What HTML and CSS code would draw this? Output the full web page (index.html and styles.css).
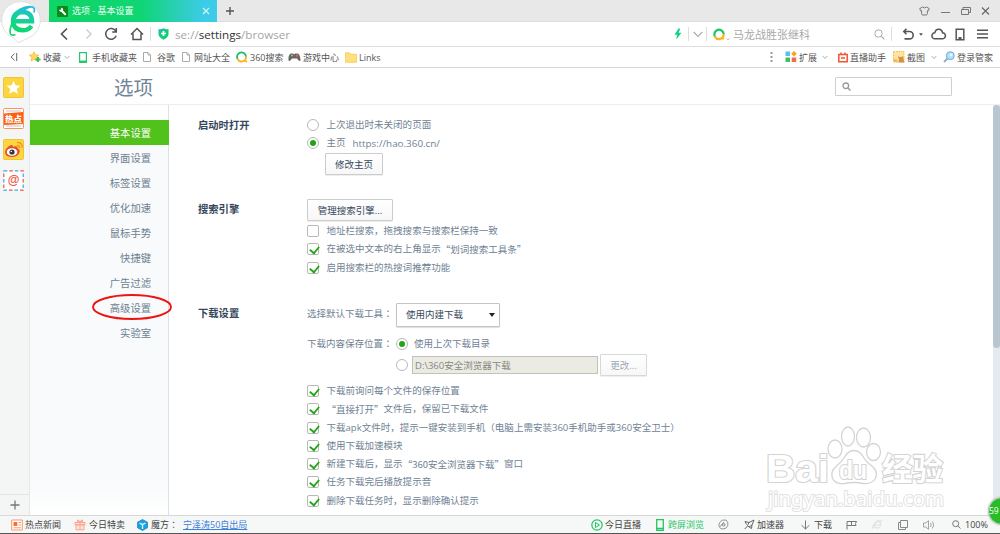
FILE: index.html
```html
<!DOCTYPE html>
<html lang="zh-CN">
<head>
<meta charset="utf-8">
<title>选项 - 基本设置</title>
<link rel="stylesheet" href="styles.css">
</head>
<body>
<div class="browser">
  <header class="titlebar">
    <div class="tab">
      <svg class="tab-icon" viewBox="0 0 11 11" width="11" height="11"><rect width="11" height="11" rx="1" fill="#0b8a1c"/><path d="M4.2 4.2L8.2 8.3" stroke="#fff" stroke-width="2" stroke-linecap="round"/><path d="M2.2 3.6a2 2 0 1 0 1.5-1.7l1 1.3-.8 1.2z" fill="#fff"/></svg>
      <span class="tab-title">选项 - 基本设置</span>
      <svg width="8" height="8" viewBox="0 0 8 8"><path d="M1 1l6 6M7 1L1 7" stroke="#d9f6f7" stroke-width="1.1"/></svg>
    </div>
    <svg class="newtab" width="10" height="10" viewBox="0 0 10 10"><path d="M5 1v8M1 5h8" stroke="#555" stroke-width="1.4"/></svg>
    <div class="window-buttons">
      <svg width="11" height="10" viewBox="0 0 11 10"><path d="M3.5 1Q5.5 2.7 7.5 1L10.3 2.7 9.4 4.8 8.4 4.6V7.5Q8.4 9 7 9H4Q2.6 9 2.6 7.5V4.6L1.6 4.8.7 2.7z" fill="none" stroke="#777"/></svg>
      <svg width="9" height="10" viewBox="0 0 9 10"><path d="M0 6.5h9" stroke="#777"/></svg>
      <svg width="10" height="10" viewBox="0 0 10 10"><path d="M.5 3.5h7v5h-7zM2 3V1.5h7.500v5H8" fill="none" stroke="#777"/></svg>
      <svg width="9" height="10" viewBox="0 0 9 10"><path d="M1 1.500l7 7M8 1.500l-7 7" stroke="#666" stroke-width="1.1"/></svg>
    </div>
  </header>

  <div class="navbar">
    <svg width="8" height="14" viewBox="0 0 8 14"><path d="M7 1.500L1.500 7 7 12.500" fill="none" stroke="#555" stroke-width="1.7"/></svg>
    <svg width="8" height="12" viewBox="0 0 8 12"><path d="M1.500 1.500L6 6l-4.500 4.500" fill="none" stroke="#ccc" stroke-width="1.4"/></svg>
    <svg width="14" height="14" viewBox="0 0 14 14"><path d="M11.800 4.200A5.400 5.400 0 1 0 12.200 8.800M12.300 1v4H8.200" fill="none" stroke="#555" stroke-width="1.5"/></svg>
    <svg width="14" height="14" viewBox="0 0 14 14"><path d="M1 7.500L7 1.500l6 6M3 6.500v6h8v-6" fill="none" stroke="#555" stroke-width="1.5"/></svg>
    <i class="divider"></i>
    <svg width="11" height="12" viewBox="0 0 11 12"><defs><linearGradient id="shield" x1="0" x2="1" y2="1"><stop stop-color="#19b7d0"/><stop offset=".5" stop-color="#12cf76"/><stop offset="1" stop-color="#06cb69"/></linearGradient></defs><path d="M.5 1Q3 1.500 5.500.3 8 1.500 10.500 1v5.500Q10 9.500 5.500 11.700 1 9.500.5 6.500z" fill="url(#shield)"/><path d="M5.500 3v5M3 5.500h5" stroke="#fff" stroke-width="1.700"/></svg>
    <div class="url"><span>se://</span><b>settings</b><span>/browser</span></div>
    <svg width="8" height="12" viewBox="0 0 8 12"><path d="M4.500.5L.5 6.700h2.500L2.300 11.500 7.500 4.800H4.600L6.300.5z" fill="#12d383"/></svg>
    <i class="divider"></i>
    <svg width="10" height="7" viewBox="0 0 10 7"><path d="M.7 1L5 5.500 9.300 1" fill="none" stroke="#aaa" stroke-width="1.100"/></svg>
    <i class="divider"></i>
    <svg width="18" height="13" viewBox="0 0 18 13"><path d="M1.800 8.500a4.700 4.700 0 1 1 8.900-2.500" fill="none" stroke="#17c964" stroke-width="2.200"/><path d="M10.700 6a4.700 4.700 0 0 1-8.800 2.600" fill="none" stroke="#fbb51d" stroke-width="2.200"/><path d="M8.800 9.800l2 1.500" stroke="#fbb51d" stroke-width="2"/><path d="M13.500 10.500l1.500 1.400 1.500-1.400" fill="none" stroke="#aaa" stroke-width=".8"/></svg>
    <span class="hot-search">马龙战胜张继科</span>
    <svg width="11" height="11" viewBox="0 0 11 11"><circle cx="4.500" cy="4.500" r="3.700" fill="none" stroke="#aaa"/><path d="M7.300 7.300L10.300 10.300" stroke="#aaa" stroke-width="1.100"/></svg>
    <i class="divider"></i>
    <svg width="12" height="12" viewBox="0 0 12 12"><path d="M4.500.8L1.800 3.500l2.700 2.700M2 3.500h5.500a3.700 3.700 0 0 1 0 7.400H2.500" fill="none" stroke="#555" stroke-width="1.600"/></svg>
    <svg width="4" height="3" viewBox="0 0 4 3"><path d="M0 .3h4L2 2.700z" fill="#555"/></svg>
    <svg width="15" height="12" viewBox="0 0 15 12"><path d="M4 10.800a3 3 0 0 1-.2-6Q4.500 1 8 1.200 11 1.400 11.600 4.800A3 3 0 0 1 11.300 10.800z" fill="none" stroke="#555" stroke-width="1.500"/></svg>
    <svg width="10" height="13" viewBox="0 0 10 13"><path d="M1.200 1.200h7.600v10.600H1.200z" fill="none" stroke="#555" stroke-width="1.500"/><path d="M3.500 10h3" stroke="#555" stroke-width="2"/></svg>
    <svg width="11" height="10" viewBox="0 0 11 10"><path d="M0 1.200h11M0 5h11M0 8.800h11" stroke="#555" stroke-width="1.400"/></svg>
  </div>

  <nav class="bookmarks">
    <svg width="8" height="10" viewBox="0 0 8 10"><path d="M4.500 1.500L1.200 5l3.300 3.500M6.700 1v8" fill="none" stroke="#666"/></svg>
    <svg width="12" height="12" viewBox="0 0 12 12"><path d="M5 .7l1.400 3 3.300.4L7.400 6.500l.6 3.400-3-1.600-3 1.600.6-3.400L.3 4.100l3.300-.4z" fill="#ffd95e" stroke="#f0b43c" stroke-width=".7"/><path d="M9 6v5M6.500 8.500h5" stroke="#43bb61" stroke-width="2"/></svg>
    <span>收藏</span>
    <svg width="6" height="5" viewBox="0 0 6 5"><path d="M.7 1L3 3.500 5.300 1" fill="none" stroke="#999" stroke-width=".8"/></svg>
    <svg width="8" height="11" viewBox="0 0 8 11"><path d="M.6.6h6.800v9.800H.6z" fill="#fff" stroke="#28c76f" stroke-width="1.200"/><path d="M1 9.300h6" stroke="#28c76f" stroke-width="1.500"/></svg>
    <span>手机收藏夹</span>
    <svg width="8" height="10" viewBox="0 0 8 10"><path d="M.5.5h4.500l2.500 2.500v6.500h-7zM5 .5V3h2.500" fill="none" stroke="#aaa"/></svg>
    <span>谷歌</span>
    <svg width="8" height="10" viewBox="0 0 8 10"><path d="M.5.5h4.500l2.500 2.500v6.500h-7zM5 .5V3h2.500" fill="none" stroke="#aaa"/></svg>
    <span>网址大全</span>
    <svg width="12" height="12" viewBox="0 0 12 12"><path d="M1.500 8a4.500 4.500 0 1 1 8.500-2.300" fill="none" stroke="#19bf6a" stroke-width="1.800"/><path d="M10 5.700A4.500 4.500 0 0 1 1.500 8M9 9.700l2 1.300" fill="none" stroke="#fbb51d" stroke-width="1.800"/></svg>
    <span>360搜索</span>
    <svg width="13" height="10" viewBox="0 0 13 10"><path d="M2.800 1.500H5l1 1 1-1h3Q12.300 3 12.500 8.500q-1.500 1.500-3.500-2H4Q2 10 .5 8.500 0 3 2.800 1.500z" fill="#666"/><path d="M3 3.500h2M4 2.500v2" stroke="#7fd477"/><circle cx="9" cy="3.500" r="1.300" fill="#e55"/></svg>
    <span>游戏中心</span>
    <svg width="12" height="11" viewBox="0 0 12 11"><path d="M.5.8h4l1 1.500h6v8H.5z" fill="#ffe07b" stroke="#f0cc62" stroke-width=".8"/></svg>
    <span>Links</span>
    <svg width="3" height="12" viewBox="0 0 3 12"><path d="M.5 1h2v2h-2zM.5 5h2v2h-2zM.5 9h2v2h-2z" fill="#999"/></svg>
    <svg width="12" height="12" viewBox="0 0 12 12"><path d="M.5.5H5V5H.5z" fill="#59c1f1"/><path d="M9 0l2.800 2.800L9 5.600 6.200 2.800z" fill="#f4a51f"/><path d="M.5 6.500H5V11H.5z" fill="#44bd62"/><path d="M6.700 6.500h4.500V11H6.700z" fill="#f4684e"/></svg>
    <span>扩展</span>
    <svg width="6" height="5" viewBox="0 0 6 5"><path d="M.7 1L3 3.500 5.300 1" fill="none" stroke="#999" stroke-width=".8"/></svg>
    <svg width="10" height="11" viewBox="0 0 10 11"><path d="M.8 2.500h8.400v7.300H.8zM3 .5v2M7 .5v2M3 6.100h4" fill="none" stroke="#f35430" stroke-width="1.500"/></svg>
    <span>直播助手</span>
    <svg width="12" height="12" viewBox="0 0 12 12"><rect x=".5" y=".5" width="10.500" height="10.500" fill="#ffe4a1" stroke="#efb94f" stroke-dasharray="1.500 1"/><path d="M5 5l1.500 1h2L10 5l.5 3 1 3.500H5.500L6 9z" fill="#d68f45"/><path d="M1 8l3 .5L5 11H1z" fill="#f1b65f"/></svg>
    <span>截图</span>
    <svg width="6" height="5" viewBox="0 0 6 5"><path d="M.7 1L3 3.500 5.300 1" fill="none" stroke="#999" stroke-width=".8"/></svg>
    <svg width="12" height="12" viewBox="0 0 12 12"><path d="M4.500 7.500L1 11" stroke="#9bacba" stroke-width="2"/><circle cx="7.300" cy="4.700" r="4" fill="#b5dcf5" stroke="#70aee1"/><circle cx="8" cy="4" r="1.500" fill="#e9f7ff"/></svg>
    <span>登录管家</span>
  </nav>

  <main class="workspace">
    <aside class="dock">
      <svg width="21" height="21" viewBox="0 0 21 21"><rect x=".5" y=".5" width="20" height="20" rx="1" fill="#fdd63f" stroke="#efc536"/><path d="M10.500 3.800l2 4.400 4.900.6-3.600 3.200 1 4.800-4.300-2.400-4.300 2.400 1-4.800L3.600 8.800l4.900-.6z" fill="#fff"/></svg>
      <svg width="21" height="21" viewBox="0 0 21 21"><rect x=".5" y=".5" width="20" height="20" rx="1" fill="#fff" stroke="#f79462"/><path d="M3 3h15M3 18h15" stroke="#c9c3c0"/><path d="M1 5.500l19-1.500v12L1 17z" fill="#fa6011"/><text class="dock-hot" x="2" y="14">热点</text></svg>
      <svg width="21" height="21" viewBox="0 0 21 21"><rect x=".5" y=".5" width="20" height="20" rx="1" fill="#fdd63f" stroke="#efc536"/><path d="M2 13.500q0-4 5-7 3-1.500 3 1.300 5-1.800 4.700 1.600 3 1.100 1.600 4.600-2 4-7.300 4-6.500 0-7-4.500z" fill="#e64d30"/><ellipse cx="9" cy="13" rx="5.300" ry="3.800" fill="#fff"/><circle cx="9" cy="13" r="2.600" fill="#333"/><circle cx="8.300" cy="12.500" r=".8" fill="#fff"/><path d="M14 6.300q2.800 0 2.700 3M14 3.300q5.200-.2 5.300 5.500" fill="none" stroke="#f28d29" stroke-width="1.300"/></svg>
      <svg width="21" height="21" viewBox="0 0 21 21"><rect x=".8" y=".8" width="19.400" height="19.400" fill="#fff" stroke="#3ca7e8" stroke-width="1.200" stroke-dasharray="3.500 7.500"/><rect x=".8" y=".8" width="19.400" height="19.400" fill="none" stroke="#ee5541" stroke-width="1.200" stroke-dasharray="3.500 7.500" stroke-dashoffset="-5.500"/><text class="dock-at" x="10.500" y="14">@</text></svg>
      <div class="dock-add"><svg width="10" height="10" viewBox="0 0 10 10"><path d="M5 .5v9M.5 5h9" stroke="#777" stroke-width="1.300"/></svg></div>
    </aside>

    <div class="page">
      <div class="page-head">
        <h1>选项</h1>
        <div class="search"><svg width="9" height="9" viewBox="0 0 9 9"><circle cx="3.800" cy="3.800" r="2.800" fill="none" stroke="#999" stroke-width="1.300"/><path d="M6 6l2.500 2.500" stroke="#999" stroke-width="1.500"/></svg></div>
      </div>
      <div class="page-body">
        <ul class="menu">
          <li class="active">基本设置</li><li>界面设置</li><li>标签设置</li><li>优化加速</li><li>鼠标手势</li><li>快捷键</li><li>广告过滤</li><li>高级设置</li><li>实验室</li>
        </ul>
        <div class="settings">
          <section class="startup">
            <h2>启动时打开</h2>
            <div>
              <div class="row"><i class="radio"></i>上次退出时未关闭的页面</div>
              <div class="row"><i class="radio on"></i>主页<span class="home-url">https://hao.360.cn/</span></div>
              <div class="button home-button">修改主页</div>
            </div>
          </section>
          <section class="engine">
            <h2>搜索引擎</h2>
            <div>
              <div class="button engine-button">管理搜索引擎...</div>
              <div class="row"><i class="check"></i>地址栏搜索，拖拽搜索与搜索栏保持一致</div>
              <div class="row"><i class="check on"></i>在被选中文本的右上角显示<span class="quote">“划词搜索工具条”</span></div>
              <div class="row"><i class="check on"></i>启用搜索栏的热搜词推荐功能</div>
            </div>
          </section>
          <section class="download">
            <h2>下载设置</h2>
            <div>
              <div class="field tool"><span>选择默认下载工具<em lang="zh-TW">：</em></span><div class="select">使用内建下载<i></i></div></div>
              <div class="field place"><span>下载内容保存位置<em lang="zh-TW">：</em></span><i class="radio on"></i>使用上次下载目录</div>
              <div class="field folder"><span></span><i class="radio"></i><div class="input">D:\360安全浏览器下载</div><div class="button disabled">更改...</div></div>
              <div class="row"><i class="check on"></i>下载前询问每个文件的保存位置</div>
              <div class="row"><i class="check on"></i><span class="quote">“直接打开”</span>文件后，保留已下载文件</div>
              <div class="row"><i class="check on"></i>下载apk文件时，提示一键安装到手机（电脑上需安装360手机助手或360安全卫士）</div>
              <div class="row"><i class="check on"></i>使用下载加速模块</div>
              <div class="row"><i class="check on"></i>新建下载后，显示<span class="quote">“360安全浏览器下载”</span>窗口</div>
              <div class="row"><i class="check on"></i>任务下载完后播放提示音</div>
              <div class="row"><i class="check on"></i>删除下载任务时，显示删除确认提示</div>
            </div>
          </section>
        </div>
        <div class="scrollbar"><i></i></div>
      </div>
    </div>
  </main>

  <footer class="status">
    <svg width="12" height="12" viewBox="0 0 12 12"><path d="M.7 1h10.600v10H.7z" fill="#fff" stroke="#f79a6a"/><path d="M2.500 3h3.800v4H2.500z" fill="#fa6d2d"/><path d="M7.500 3.500h2.500M7.500 6h2.500M2.500 8.800h7.500" stroke="#f79a6a"/></svg>
    <span>热点新闻</span>
    <svg width="12" height="12" viewBox="0 0 12 12"><path d="M1 3.500h10v2.300H1zM2 5.800h8v5H2zM6 3.500v7M6 3.500Q2 3 3.500 1 5 .5 6 3.500 7 .5 8.500 1 10 3 6 3.500" fill="#ffe5dc" stroke="#f9a48d"/></svg>
    <span>今日特卖</span>
    <svg width="11" height="12" viewBox="0 0 11 12"><path d="M5.500.5l5 2.700v5.600l-5 2.700-5-2.700V3.200z" fill="#16a3df" stroke="#2476b8" stroke-width=".7"/><path d="M2.500 4l3 1.700 3-1.700M5.500 5.700V10" fill="none" stroke="#d5f3ff" stroke-width="1.400"/></svg>
    <span>魔方<em lang="zh-TW">：</em></span>
    <a>宁泽涛50自出局</a>
    <svg width="12" height="12" viewBox="0 0 12 12"><circle cx="6" cy="6" r="5.200" fill="none" stroke="#20c763" stroke-width="1.200"/><path d="M4.500 3.500L8.500 6l-4 2.500z" fill="none" stroke="#20c763"/></svg>
    <span>今日直播</span>
    <svg width="8" height="12" viewBox="0 0 8 12"><path d="M.7.7h6.600v10.600H.7zM1 9.500h6" fill="none" stroke="#20c763" stroke-width="1.300"/></svg>
    <span class="green">跨屏浏览</span>
    <svg width="11" height="11" viewBox="0 0 11 11"><path d="M1 7.500Q.5 3 4.500 1.200L8 1Q10.500 3 9.800 6.500 8.500 10 5 10 2 10 1.500 8L6 3M4 6a1.500 1.500 0 1 0 3-1Q6 3.500 4 6" fill="none" stroke="#777" stroke-width=".8"/></svg>
    <svg width="11" height="11" viewBox="0 0 11 11"><path d="M3.500 6.500L5 3.500 10 1 8 6 5 8zM5 3.500L1 2.500l1.500 3M5 8l2.500 1.500.5-3.500M3.500 7L.8 10" fill="none" stroke="#666"/></svg>
    <span>加速器</span>
    <svg width="9" height="10" viewBox="0 0 9 10"><path d="M4.500.5v8.500M.7 5.300l3.800 3.700 3.800-3.700" fill="none" stroke="#777"/></svg>
    <span>下载</span>
    <svg width="11" height="10" viewBox="0 0 11 10"><path d="M1 9.500V1.500h9.500l-1 2 .5 2H5.500v-4M1 5.500h4.500" fill="none" stroke="#777"/></svg>
    <svg width="11" height="11" viewBox="0 0 11 11"><path d="M1.500 6h7.500Q9 2.500 5.500 2.500 2 3 2 6.200 2 9 5.500 9.200q2 0 3-1.700M2 9Q0 10 1 7 4 1 8 1q2 0 1 2" fill="none" stroke="#ddd"/></svg>
    <svg width="10" height="10" viewBox="0 0 10 10"><path d="M2.500.5h7v7h-7zM2.500 2.500h-2v7h7v-2" fill="none" stroke="#888"/></svg>
    <svg width="12" height="10" viewBox="0 0 12 10"><path d="M.5 3h2.300L5.500.7v8.600L2.800 7H.5zM7.500 3q1.500 2 0 4M9.300 1.500q3 3.500 0 7" fill="none" stroke="#999" stroke-width=".9"/></svg>
    <svg width="9" height="9" viewBox="0 0 9 9"><circle cx="3.700" cy="3.700" r="3" fill="none" stroke="#777"/><path d="M6 6l2.500 2.500" stroke="#777"/></svg>
    <span>100%</span>
  </footer>

  <svg class="logo" width="40" height="44" viewBox="0 0 40 44">
    <defs><linearGradient id="e" gradientUnits="userSpaceOnUse" x1="26" y1="5" x2="18" y2="35"><stop stop-color="#28b6e6"/><stop offset=".4" stop-color="#16cfa0"/><stop offset="1" stop-color="#0dda63"/></linearGradient></defs>
    <path d="M20.500 1.500a19 19 0 0 1 6.500 36.800L17 42.700l-4-4.400A19 19 0 0 1 20.500 1.500z" fill="#fff" stroke="#d9d9d9" stroke-width=".8"/>
    <path d="M13 21.300H31Q30.800 12.200 21.500 12 12.300 12.300 12 21.500 12.500 29.800 21.500 30.300 27.500 30.300 30.500 26" fill="none" stroke="url(#e)" stroke-width="4.500"/>
    <path d="M14.500 34.800Q8.500 36.500 9 30.500 10.500 20 20 12 28 6 32 7.200 34.300 8.500 33 12.500" fill="none" stroke="url(#e)" stroke-width="1.700"/>
    <path d="M10 19Q13 9.500 23.500 6.500 29 5 32.500 6.500 22 7.500 15.500 16.500z" fill="url(#e)"/>
  </svg>

  <svg class="marker" width="82" height="28" viewBox="0 0 82 28"><ellipse cx="41" cy="14" rx="39" ry="12" fill="none" stroke="#f01313" stroke-width="1.900"/></svg>

  <svg class="watermark" width="184" height="92" viewBox="0 0 184 92">
    <g fill="#fff" stroke="#d4d4d4" stroke-width="1.300">
      <ellipse cx="30" cy="31" rx="7" ry="9"/><ellipse cx="43" cy="18.500" rx="6.500" ry="9.500"/><ellipse cx="58.500" cy="19.500" rx="7" ry="9.500"/><ellipse cx="68.500" cy="34" rx="7" ry="8.500"/>
      <path d="M49 32.500q6 0 10 7.500 3 5 8.500 8.500 6 5 3 12-4 6-12 5-9.500-2-19 0-9 1-12-5-2.500-7 3.500-12 5-4 8-8.500 4-7.500 10-7.500z"/>
    </g>
    <g class="wm-text"><text class="wm-latin" x="-39" y="64" textLength="63" lengthAdjust="spacingAndGlyphs">Bai</text><text class="wm-du" x="34" y="61" textLength="28" lengthAdjust="spacingAndGlyphs">du</text><text class="wm-cn" x="77" y="62" textLength="61" lengthAdjust="spacingAndGlyphs">经验</text><text class="wm-site" x="-37" y="88" textLength="176" lengthAdjust="spacingAndGlyphs">jingyan.baidu.com</text></g>
  </svg>
  <div class="score">59</div>
</div>
</body>
</html>
```
FILE: styles.css
```css
* { box-sizing: border-box; }
body { margin: 0; overflow: hidden; font-family: "Open Sans", "Noto Sans CJK SC", sans-serif; }
svg { display: block; flex: none; overflow: visible; }
i { display: block; font-style: normal; }
em { font: inherit; font-family: "Noto Sans CJK TC", sans-serif; line-height: 1; }
.browser { position: relative; width: 1000px; height: 534px; overflow: hidden; display: flex; flex-direction: column; background: #fff; white-space: nowrap; }

.titlebar { height: 22px; flex: none; display: flex; align-items: center; background: #e8e8e8; padding-left: 49px; box-shadow: inset 0 -1px #dedede; }
.tab { width: 168px; height: 22px; display: flex; align-items: center; padding: 0 7px 0 8px; background: linear-gradient(90deg, #0ed564 0%, #10d574 55%, #3dcbea 93%); color: #edfff5; font-size: 9px; }
.tab-title { flex: 1; margin-left: 4px; line-height: 20px; }
.newtab { margin-left: 8px; }
.window-buttons { display: grid; grid-template-columns: 22px 20px 20px 10px; margin-left: auto; padding-right: 9px; align-items: center; }

.navbar { height: 25px; flex: none; display: grid; grid-template-columns: 25px 19px 26px 20px 8px 17px 499px 14px 5px 13px 7px 20px 141px 17px 11px 17px 12px 24px 22px 12px; padding-left: 60px; align-items: center; border-bottom: 1px solid #dedede; }
.divider { width: 1px; height: 14px; background: #ddd; }
.url { font-size: 11.65px; line-height: 20px; padding-top: 1px; color: #a5a5a5; }
.url b { font-weight: 400; color: #333; }
.hot-search { font-size: 11px; color: #a8a8a8; line-height: 20px; padding-top: 2px; }

.bookmarks { height: 21px; flex: none; display: grid; grid-template-columns: 19px 14px 21px 15px 13px 51px 14px 25px 12px 42px 14px 38px 15px 42px 14px 411px 15px 14px 23px 16px 12px 43px 14px 24px 12px 14px 40px; padding-left: 10px; align-items: center; font-size: 9px; color: #555; border-bottom: 1px solid #d6d6d6; }
.bookmarks span { line-height: 18px; padding-top: 1px; }

.workspace { flex: 1; min-height: 0; display: grid; grid-template-columns: 30px 1fr; }
.dock { display: flex; flex-direction: column; gap: 10px; padding: 9px 0 0 3px; background: #f4f6f6; border-right: 1px solid #e6e8e8; }
.dock-hot { font: 900 8.5px "Noto Sans CJK SC", sans-serif; fill: #fff; }
.dock-at { font: bold 12px "Liberation Sans", sans-serif; fill: #ee5541; text-anchor: middle; }
.dock-add { margin: auto 0 0 -3px; height: 21px; border-top: 1px solid #e2e5e5; display: grid; place-items: center; }

.page { display: flex; flex-direction: column; min-height: 0; }
.page-head { height: 37px; flex: none; display: flex; justify-content: space-between; align-items: center; padding: 0 48px 0 84px; border-bottom: 1px solid #eee; }
h1 { margin: 0; padding-top: 3px; font-size: 19.500px; font-weight: 400; line-height: 34px; color: #718598; }
.search { width: 117px; height: 19px; border: 1px solid #cfcfcf; border-radius: 1px; display: flex; align-items: center; padding-left: 6px; }
.page-body { flex: 1; min-height: 0; display: grid; grid-template-columns: 139px 1fr 7px; }
.menu { list-style: none; margin: 0; padding: 15px 0 0; color: #6d7f90; font-size: 10.300px; background: linear-gradient(#fff, #f8fafb 10%, #f8fafb 92%, #fff); border-right: 1px solid #dbe1e6; }
.menu li { height: 24.950px; line-height: 27px; padding-right: 17px; text-align: right; }
.menu .active { background: #51c11b; color: #fff; margin-right: -1px; padding-right: 18px; }

.settings { padding: 11px 0 0 29px; color: #708294; font-size: 9.520px; display: flex; flex-direction: column; }
.settings section { display: grid; grid-template-columns: 109px 1fr; }
.startup { height: 83px; }
.engine { height: 104px; }
h2 { margin: 0; font-size: 10.300px; font-weight: 700; line-height: 18px; color: #35485b; }
.engine h2 { line-height: 21px; }
.download h2 { line-height: 20px; }
.row { height: 18.270px; display: flex; align-items: center; line-height: 18px; }
.radio, .check { position: relative; flex: none; width: 12px; height: 12px; border: 1px solid #b8b8b8; background: #fff; margin-right: 7.500px; }
.radio { border-radius: 50%; }
.check { border-radius: 2px; }
.radio.on::after { content: ""; position: absolute; left: 2px; top: 2px; width: 6px; height: 6px; border-radius: 50%; background: #21a515; }
.check.on::after { content: ""; position: absolute; left: 2.500px; top: 0; width: 5px; height: 8px; border: solid #21a515; border-width: 0 2px 2px 0; transform: rotate(40deg) scale(.9); }
.quote { font-family: "Noto Sans CJK SC", sans-serif; line-height: 16px; padding-bottom: 1px; }
.home-url { margin-left: 7px; font-size: 9.850px; }
.button { height: 22px; border: 1px solid #ccc; border-radius: 1px; background: linear-gradient(#fff, #f7f7f7); box-shadow: 0 1px 1px #eee; color: #35485b; text-align: center; line-height: 21px; }
.home-button { width: 58px; margin: 0 0 0 18px; }
.engine-button { width: 86px; margin-bottom: 1px; }
.field { display: flex; align-items: center; line-height: 18px; }
.field > span { width: 89px; flex: none; }
.tool { height: 24px; }
.tool > span { line-height: 18px; padding-bottom: 2px; }
.select { width: 104px; height: 24px; padding: 0 4px 0 9px; border: 1px solid #c4c4c4; border-radius: 1px; box-shadow: 0 1px 1px #ddd; color: #35485b; display: flex; align-items: center; justify-content: space-between; }
.select i { border: solid transparent; border-width: 4px 3px 0; border-top-color: #222; }
.place { height: 18px; margin-top: 8px; }
.place .radio { margin-right: 6px; }
.folder { height: 22px; margin: 1px 0 6px; }
.folder .radio { margin-right: 4px; }
.input { width: 186px; height: 18px; border: 1px solid #c2c2bc; background: #ebebe4; color: #87877f; padding-left: 2px; line-height: 17px; margin-right: 2px; }
.disabled { width: 47px; border-color: #d8d8d8; color: #9ba7b3; }
.scrollbar { background: #e4ebf0; }
.scrollbar i { height: 243px; border-radius: 4px; background: #b8c6d2; }

.status { height: 19px; flex: none; display: grid; grid-template-columns: 14px 49px 15px 48px 14px 32px 408px 14px 51px 12px 50px 26px 13px 44px 13px 32px 26px 26px 25px 29px 13px 25px; padding-left: 11px; align-items: center; background: #f6f7f7; border-top: 1px solid #d8d8d8; border-bottom: 1px solid #555; font-size: 9px; color: #444; }
.status span, .status a { line-height: 16px; }
.status a { color: #3c80d8; text-decoration: underline; }
.status .green { color: #20c763; }

.logo { position: absolute; left: 1px; top: 0; }
.marker { position: absolute; left: 90.500px; top: 293px; }
.watermark { position: absolute; left: 805px; top: 418px; }
.wm-text { fill: #fff; stroke: #d4d4d4; stroke-width: 2.200px; paint-order: stroke; }
.wm-latin { font: bold 38px "Liberation Sans", sans-serif; }
.wm-du { font: bold 25px "Liberation Sans", sans-serif; }
.wm-cn { font: bold 31px "Noto Sans CJK SC", sans-serif; }
.wm-site { font: 20px "Noto Sans", sans-serif; stroke: #e2e2e2; stroke-width: 2px; }
.score { position: absolute; left: 988px; top: 497px; width: 28px; height: 28px; border: 1px solid #ccc; border-radius: 50%; background: #26bd26; color: #fff; font-size: 8.500px; line-height: 26px; padding-left: 0; box-shadow: 0 0 2px #aaa; }
```
